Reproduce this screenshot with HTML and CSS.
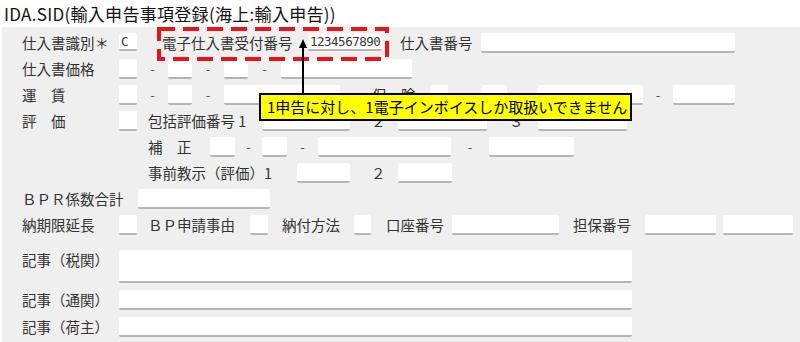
FILE: index.html
```html
<!DOCTYPE html>
<html lang="ja">
<head>
    <meta charset="UTF-8">
    <title>IDA.SID</title>
    <link rel="stylesheet" href="styles.css">
</head>
<body>
    <h1 class="title">IDA.SID(輸入申告事項登録(海上:輸入申告))</h1>

    <div class="panel">
        <div class="row">
            <span class="lbl">仕入書識別＊</span>
            <span class="fld w18 mono">C</span>
            <span class="sub s171">電子仕入書受付番号</span>
            <span class="fld w74 mono">1234567890</span>
            <span class="sub s99">仕入書番号</span>
            <span class="fld w254"></span>
        </div>
        <div class="row">
            <span class="lbl">仕入書価格</span>
            <span class="fld w18"></span>
            <span class="dash d31">-</span>
            <span class="fld w24"></span>
            <span class="dash d32">-</span>
            <span class="fld w24"></span>
            <span class="dash d33">-</span>
            <span class="fld w131"></span>
        </div>
        <div class="row">
            <span class="lbl">運　賃</span>
            <span class="fld w18"></span>
            <span class="dash d31">-</span>
            <span class="fld w24"></span>
            <span class="dash d32">-</span>
            <span class="fld w116"></span>
            <span class="sub s90">保　険</span>
            <span class="fld w18"></span>
            <span class="dash d34"></span>
            <span class="fld w25"></span>
            <span class="dash d31"></span>
            <span class="fld w105"></span>
            <span class="dash d30">-</span>
            <span class="fld w62"></span>
        </div>
        <div class="row">
            <span class="lbl">評　価</span>
            <span class="fld w18"></span>
            <span class="sub s125">包括評価番号 1</span>
            <span class="fld w88"></span>
            <span class="sub s48">２</span>
            <span class="fld w89"></span>
            <span class="sub s51">３</span>
            <span class="fld w89"></span>
        </div>
        <div class="row">
            <span class="lbl"></span>
            <span class="sub s91">補　正</span>
            <span class="fld w25"></span>
            <span class="dash d27">-</span>
            <span class="fld w25"></span>
            <span class="dash d31">-</span>
            <span class="fld w133"></span>
            <span class="dash d38">-</span>
            <span class="fld w85"></span>
        </div>
        <div class="row">
            <span class="lbl"></span>
            <span class="sub s178">事前教示（評価）1</span>
            <span class="fld w53"></span>
            <span class="sub s48">２</span>
            <span class="fld w54"></span>
        </div>
        <div class="row">
            <span class="lbl wide">ＢＰＲ係数合計</span>
            <span class="fld w132"></span>
        </div>
        <div class="row">
            <span class="lbl">納期限延長</span>
            <span class="fld w18"></span>
            <span class="sub s113">ＢＰ申請事由</span>
            <span class="fld w18"></span>
            <span class="sub s86">納付方法</span>
            <span class="fld w17"></span>
            <span class="sub s81">口座番号</span>
            <span class="fld w107"></span>
            <span class="sub s86">担保番号</span>
            <span class="fld w71"></span>
            <span class="fld w70 next"></span>
        </div>
        <div class="row memo first">
            <span class="lbl">記事（税関）</span>
            <span class="fld w513 tall"></span>
        </div>
        <div class="row memo">
            <span class="lbl">記事（通関）</span>
            <span class="fld w513"></span>
        </div>
        <div class="row memo">
            <span class="lbl">記事（荷主）</span>
            <span class="fld w513"></span>
        </div>

        <!-- annotation over the form -->
        <svg class="mark" width="232" height="34" viewBox="0 0 232 34">
            <rect x="2" y="2" width="228" height="30" fill="none" stroke="#e8141c" stroke-width="4" stroke-dasharray="16 8"/>
        </svg>
        <svg class="arrow" width="10" height="54" viewBox="0 0 10 54">
            <path d="M5 0 L9 9 L1 9 Z" fill="#000"/>
            <line x1="5" y1="6" x2="5" y2="54" stroke="#000" stroke-width="2"/>
        </svg>
        <div class="note">1申告に対し、1電子インボイスしか取扱いできません</div>
    </div>
</body>
</html>
```

FILE: styles.css
```css
body {
    margin: 0;
    background: #fff;
    font-family: "Noto Sans CJK JP", sans-serif;
    color: #333;
}
.title {
    margin: 0;
    height: 27px;
    box-sizing: border-box;
    padding: 4px 0 0 4px;
    font-size: 17px;
    font-weight: normal;
    letter-spacing: 0.3px;
    line-height: 20px;
    color: #111;
}
.panel {
    position: relative;
    margin-left: 2px;
    height: 315px;
    box-sizing: border-box;
    padding: 6px 0 0 20px;
    background: #efefef;
    display: flex;
    flex-direction: column;
    gap: 6px;
    font-size: 14.5px;
}
.row {
    display: flex;
    align-items: flex-start;
    height: 20px;
    line-height: 20px;
    white-space: nowrap;
}
.row.memo { margin-top: 1px; }
.row.memo.first { margin-top: 9px; height: 33px; }
.lbl { width: 97px; flex: none; }
.lbl.wide { width: 116px; }
.sub { flex: none; box-sizing: border-box; }
.dash { flex: none; text-align: center; color: #555; font-size: 13px; }
.fld {
    flex: none;
    height: 18px;
    background: #fff;
    border-bottom: 2px solid #b5b5b5;
    border-radius: 2px;
    line-height: 18px;
}
.fld.tall { height: 31px; }
.fld.next { margin-left: 7px; }
.mono {
    font-family: "DejaVu Sans Mono", monospace;
    font-size: 12.5px;
    letter-spacing: -0.5px;
    padding-left: 2px;
    box-sizing: border-box;
    color: #333;
}

/* field widths */
.w17 { width: 17px; }
.w18 { width: 18px; }
.w24 { width: 24px; }
.w25 { width: 25px; }
.w53 { width: 53px; }
.w54 { width: 54px; }
.w62 { width: 62px; }
.w70 { width: 70px; }
.w71 { width: 71px; }
.w74 { width: 74px; }
.w85 { width: 85px; }
.w88 { width: 88px; }
.w89 { width: 89px; }
.w105 { width: 105px; }
.w107 { width: 107px; }
.w116 { width: 116px; }
.w131 { width: 131px; }
.w132 { width: 132px; }
.w133 { width: 133px; }
.w254 { width: 254px; }
.w513 { width: 513px; }

/* sub label slots: width and text indent */
.s48 { width: 48px; padding-left: 21px; }
.s51 { width: 51px; padding-left: 22px; }
.s81 { width: 81px; padding-left: 15px; }
.s86 { width: 86px; padding-left: 14px; }
.s90 { width: 90px; padding-left: 32px; }
.s91 { width: 91px; padding-left: 29px; }
.s99 { width: 99px; padding-left: 18px; }
.s113 { width: 113px; padding-left: 11px; }
.s125 { width: 125px; padding-left: 11px; }
.s171 { width: 171px; padding-left: 25px; }
.s178 { width: 178px; padding-left: 29px; }

.d27 { width: 27px; }
.d30 { width: 30px; }
.d31 { width: 31px; }
.d32 { width: 32px; }
.d33 { width: 33px; }
.d34 { width: 34px; }
.d38 { width: 38px; }

.mark {
    position: absolute;
    left: 155px;
    top: 0;
}
.arrow {
    position: absolute;
    left: 296px;
    top: 12px;
}
.note {
    position: absolute;
    left: 257px;
    top: 66px;
    width: 373px;
    height: 28px;
    box-sizing: border-box;
    border: 2px solid #000;
    background: #ffff00;
    color: #000;
    font-size: 15px;
    line-height: 24px;
    padding-left: 6px;
    white-space: nowrap;
}
```
